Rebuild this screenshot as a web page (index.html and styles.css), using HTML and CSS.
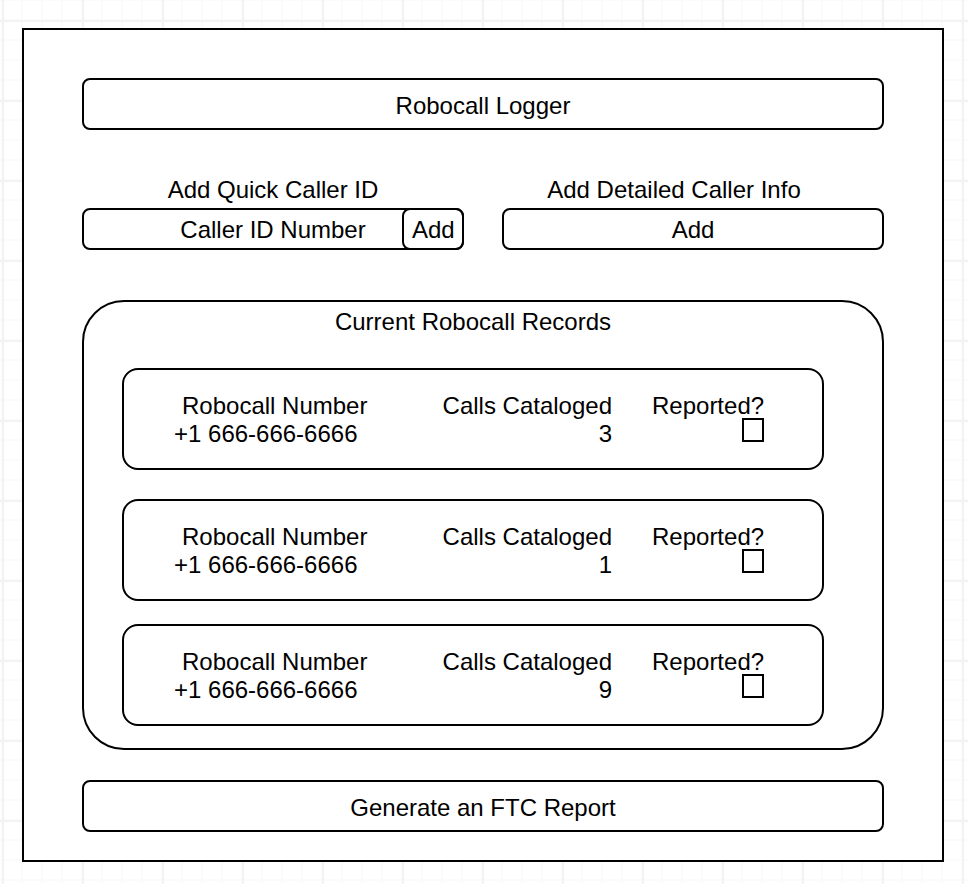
FILE: index.html
```html
<!DOCTYPE html>
<html lang="en">
<head>
  <meta charset="utf-8">
  <meta name="viewport" content="width=device-width, initial-scale=1">
  <title>Robocall Logger</title>
  <link rel="stylesheet" href="styles.css">
</head>
<body>
  <main class="frame">
    <h1 class="bar">Robocall Logger</h1>

    <div class="actions">
      <form class="action">
        <label class="action-label" for="caller-id">Add Quick Caller ID</label>
        <div class="quick-add">
          <input class="control quick-input" id="caller-id" type="text" placeholder="Caller ID Number">
          <button class="control quick-button" type="button">Add</button>
        </div>
      </form>
      <section class="action">
        <h2 class="action-label detailed-label" id="detailed">Add Detailed Caller Info</h2>
        <button class="control" type="button" aria-describedby="detailed">Add</button>
      </section>
    </div>

    <section class="records">
      <h2 class="records-title">Current Robocall Records</h2>
      <table class="record">
        <thead>
          <tr class="row"><th class="number">Robocall Number</th><th>Calls Cataloged</th><th><label for="reported-1">Reported?</label></th></tr>
        </thead>
        <tbody>
          <tr class="row"><td class="number">+1 666-666-6666</td><td>3</td><td><input class="check" id="reported-1" type="checkbox"></td></tr>
        </tbody>
      </table>
      <table class="record">
        <thead>
          <tr class="row"><th class="number">Robocall Number</th><th>Calls Cataloged</th><th><label for="reported-2">Reported?</label></th></tr>
        </thead>
        <tbody>
          <tr class="row"><td class="number">+1 666-666-6666</td><td>1</td><td><input class="check" id="reported-2" type="checkbox"></td></tr>
        </tbody>
      </table>
      <table class="record">
        <thead>
          <tr class="row"><th class="number">Robocall Number</th><th>Calls Cataloged</th><th><label for="reported-3">Reported?</label></th></tr>
        </thead>
        <tbody>
          <tr class="row"><td class="number">+1 666-666-6666</td><td>9</td><td><input class="check" id="reported-3" type="checkbox"></td></tr>
        </tbody>
      </table>
    </section>

    <button class="bar" type="button">Generate an FTC Report</button>
  </main>
</body>
</html>
```
FILE: styles.css
```css
* {
  box-sizing: border-box;
}

body {
  margin: 0;
  padding: 28px 24px 22px 22px;
  color: #000;
  font: 24px/28px "Liberation Sans", Arial, Helvetica, sans-serif;
  background-color: #fff;
  background-image:
    linear-gradient(90deg, #f3f3f3 2px, transparent 2px),
    linear-gradient(#f3f3f3 2px, transparent 2px),
    linear-gradient(90deg, #fbfbfb 2px, transparent 2px),
    linear-gradient(#fbfbfb 2px, transparent 2px);
  background-size: 80px 80px, 80px 80px, 20px 20px, 20px 20px;
  background-position: 2px 20px, 2px 20px, 1px 19px, 1px 19px;
}

h1,
h2 {
  margin: 0;
  font: inherit;
}

button,
input {
  margin: 0;
  color: inherit;
  font: inherit;
}

.frame {
  padding: 48px 58px 28px;
  border: 2px solid #000;
  background: #fff;
}

.bar {
  display: block;
  width: 100%;
  padding: 12px 8px 8px;
  border: 2px solid #000;
  border-radius: 8px;
  background: #fff;
  text-align: center;
}

.actions {
  display: grid;
  grid-template-columns: 1fr 1fr;
  gap: 38px;
  margin: 46px 0 50px;
}

.action {
  display: flex;
  flex-direction: column;
  gap: 4px;
}

.action-label {
  text-align: center;
}

.detailed-label {
  padding-right: 38px;
}

.control {
  width: 100%;
  height: 42px;
  padding: 6px 8px 4px;
  border: 2px solid #000;
  border-radius: 8px;
  background: #fff;
  text-align: center;
}

.control::placeholder {
  color: #000;
  opacity: 1;
}

/* The button shares the right end of the field's outline. */
.quick-add {
  display: grid;
  grid-template-columns: 1fr 62px;
}

.quick-input {
  grid-area: 1 / 1 / 2 / 3;
}

.quick-button {
  grid-area: 1 / 2 / 2 / 3;
  background: transparent;
}

.records {
  margin-bottom: 30px;
  padding: 6px 58px 22px 38px;
  border: 2px solid #000;
  border-radius: 42px;
}

.records-title {
  margin-bottom: 32px;
  text-align: center;
}

.record {
  display: block;
  padding: 22px 58px 20px 50px;
  border: 2px solid #000;
  border-radius: 16px;
}

.record + .record {
  margin-top: 29px;
}

.record + .record:last-child {
  margin-top: 23px;
}

.record thead,
.record tbody {
  display: block;
}

.row {
  display: grid;
  grid-template-columns: 1fr 170px 112px;
  column-gap: 40px;
  height: 28px;
}

.row th,
.row td {
  padding: 0;
  font-weight: normal;
  text-align: right;
  white-space: nowrap;
}

.row .number {
  text-align: left;
}

.row th.number {
  padding-left: 8px;
}

.check {
  display: block;
  width: 22px;
  height: 24px;
  margin: -2px 0 0 auto;
  border: 2px solid #000;
  background: #fff;
  appearance: none;
}

.check:checked {
  background: #000;
  box-shadow: inset 0 0 0 3px #fff;
}
```
